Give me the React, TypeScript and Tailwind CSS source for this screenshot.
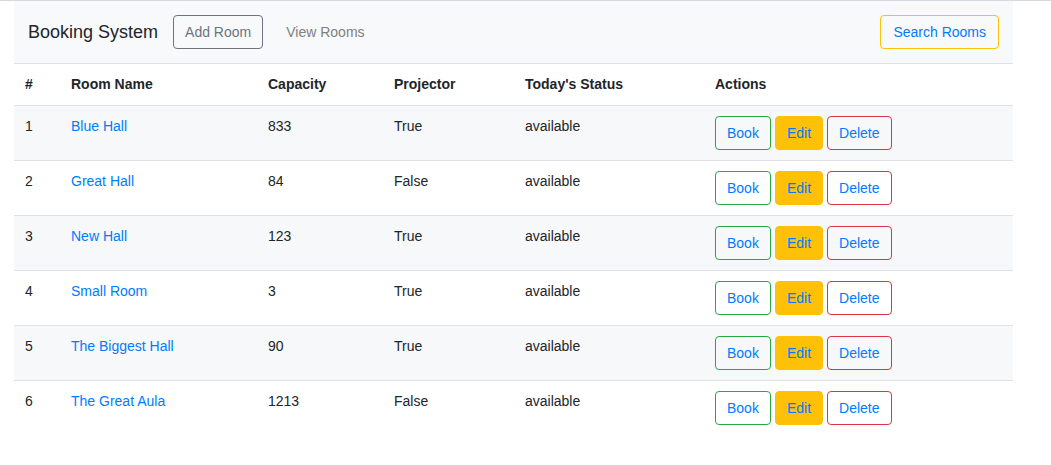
const rooms = [
  { id: 1, name: "Blue Hall", capacity: 833, projector: "True", status: "available" },
  { id: 2, name: "Great Hall", capacity: 84, projector: "False", status: "available" },
  { id: 3, name: "New Hall", capacity: 123, projector: "True", status: "available" },
  { id: 4, name: "Small Room", capacity: 3, projector: "True", status: "available" },
  { id: 5, name: "The Biggest Hall", capacity: 90, projector: "True", status: "available" },
  { id: 6, name: "The Great Aula", capacity: 1213, projector: "False", status: "available" },
];

const btn =
  "h-[34px] rounded-[4px] px-[11px] text-[14px] leading-[21px] text-[#007bff] border";

export default function App() {
  return (
    <div
      className="min-h-screen border-t border-[#d6d8db] bg-white text-[#212529]"
      style={{ fontFamily: '"Liberation Sans", Arial, sans-serif' }}
    >
      <div className="mx-[14px] w-[999px]">
        <nav className="flex h-[62px] items-center bg-[#f8f9fa] pl-[14px] pr-[14px]">
          <span className="text-[18px] leading-[27px]">Booking System</span>
          <button
            type="button"
            className="ml-[15px] h-[34px] rounded-[4px] border border-[#6c757d] px-[11px] text-[14px] text-[#6c757d]"
          >
            Add Room
          </button>
          <a className="ml-[23px] text-[14px] text-[#808080]">View Rooms</a>
          <button
            type="button"
            className="ml-auto h-[34px] rounded-[4px] border border-[#ffc107] px-[12px] text-[14px] text-[#007bff]"
          >
            Search Rooms
          </button>
        </nav>

        <table className="w-full border-collapse text-left text-[14px] leading-[21px]">
          <colgroup>
            <col className="w-[46px]" />
            <col className="w-[197px]" />
            <col className="w-[126px]" />
            <col className="w-[131px]" />
            <col className="w-[190px]" />
            <col />
          </colgroup>
          <thead>
            <tr className="h-[42px] border-t border-b border-[#dee2e6]">
              <th className="px-[11px] font-bold">#</th>
              <th className="px-[11px] font-bold">Room Name</th>
              <th className="px-[11px] font-bold">Capacity</th>
              <th className="px-[11px] font-bold">Projector</th>
              <th className="px-[11px] font-bold">Today's Status</th>
              <th className="px-[11px] font-bold">Actions</th>
            </tr>
          </thead>
          <tbody>
            {rooms.map((room, i) => (
              <tr
                key={room.id}
                className={`h-[55px] border-t border-[#dee2e6] align-top ${i % 2 === 0 ? "bg-[#f7f8f9]" : "bg-white"}`}
              >
                <td className="px-[11px] pt-[10px]">{room.id}</td>
                <td className="px-[11px] pt-[10px]">
                  <a className="text-[#007bff]">{room.name}</a>
                </td>
                <td className="px-[11px] pt-[10px]">{room.capacity}</td>
                <td className="px-[11px] pt-[10px]">{room.projector}</td>
                <td className="px-[11px] pt-[10px]">{room.status}</td>
                <td className="px-[11px] pt-[10px]">
                  <div className="flex gap-[4px]">
                    <button type="button" className={`${btn} border-[#28a745]`}>
                      Book
                    </button>
                    <button type="button" className={`${btn} border-[#ffc107] bg-[#ffc107]`}>
                      Edit
                    </button>
                    <button type="button" className={`${btn} border-[#dc3545]`}>
                      Delete
                    </button>
                  </div>
                </td>
              </tr>
            ))}
          </tbody>
        </table>
      </div>
    </div>
  );
}
